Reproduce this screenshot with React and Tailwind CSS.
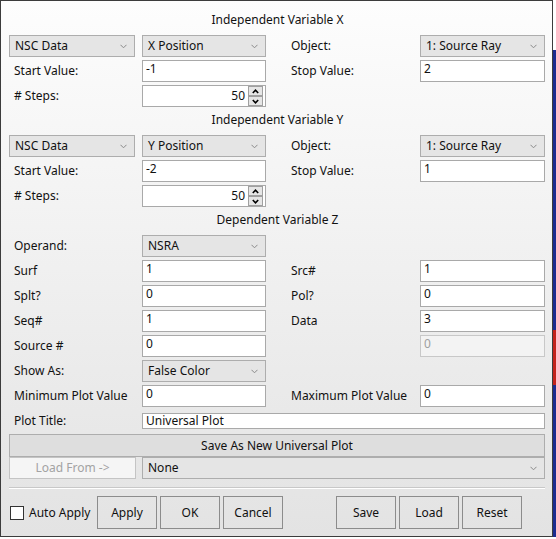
import React from 'react';

const Chevron = () => (
    <svg width="7" height="5" viewBox="0 0 7 5" className="shrink-0">
        <polyline points="0.5,0.8 3.5,3.8 6.5,0.8" fill="none" stroke="#8a8a8a" strokeWidth="1" />
    </svg>
);

const Select = ({ value, className = '' }) => (
    <div className={`h-[22px] border border-[#adadad] bg-[#e5e5e5] flex items-center justify-between pl-[5px] pr-[7px] ${className}`}>
        <span>{value}</span>
        <Chevron />
    </div>
);

const Field = ({ value, disabled, className = '' }) => (
    <div
        className={`h-[22px] border pl-[3px] leading-[16px] ${
            disabled ? 'border-[#c8c8c8] bg-[#f3f3f3] text-[#a0a0a0]' : 'border-[#a9a9a9] bg-white'
        } ${className}`}
    >
        {value}
    </div>
);

const SpinArrow = ({ up }) => (
    <div className="flex-1 border border-[#a0a0a0] bg-[#e6e6e6] flex items-center justify-center">
        <svg width="7" height="5" viewBox="0 0 7 5">
            <polyline
                points={up ? '0.8,4 3.5,1.2 6.2,4' : '0.8,1 3.5,3.8 6.2,1'}
                fill="none"
                stroke="#000"
                strokeWidth="1.6"
            />
        </svg>
    </div>
);

const Spinner = ({ value }) => (
    <div className="h-[22px] w-[124px] border border-[#a9a9a9] bg-white flex items-center pr-[2px]">
        <span className="flex-1 text-right pr-[3px]">{value}</span>
        <div className="w-[15px] h-[20px] flex flex-col">
            <SpinArrow up />
            <SpinArrow />
        </div>
    </div>
);

const Title = ({ children, className = '' }) => (
    <div className={`h-[16px] leading-[16px] text-center ${className}`}>{children}</div>
);

// four columns: 9-142 | 142-266 | 266-420 | 420-545
const Row = ({ left, mid, label, right }) => (
    <div className="flex h-[22px] items-center">
        <div className="w-[133px] shrink-0">{left}</div>
        <div className="w-[124px] shrink-0">{mid}</div>
        <div className="w-[154px] shrink-0 pl-[25px]">{label}</div>
        <div className="w-[125px] shrink-0">{right}</div>
    </div>
);

const Label = ({ children }) => <span className="pl-[5px]">{children}</span>;

const Btn = ({ children }) => (
    <div className="w-[60px] h-[33px] border border-[#8c8c8c] flex items-center justify-center shrink-0">{children}</div>
);

export default function App() {
    return (
        <div className="w-[556px] h-[539px] bg-white flex font-['Noto_Sans',sans-serif] text-[12px] text-[#111]">
            <div className="w-[553px] h-[537px] border border-[#3c3c3c] bg-linear-to-b from-[#fdfdfd] to-[#e3e3e3] pl-[8px] pr-[6px] flex flex-col">
                <Title className="mt-[11px] mb-[7px]">Independent Variable X</Title>
                <div className="flex flex-col gap-[3px]">
                    <Row
                        left={<Select value="NSC Data" className="w-[126px]" />}
                        mid={<Select value="X Position" />}
                        label="Object:"
                        right={<Select value="1: Source Ray" />}
                    />
                    <Row left={<Label>Start Value:</Label>} mid={<Field value="-1" />} label="Stop Value:" right={<Field value="2" />} />
                    <Row left={<Label># Steps:</Label>} mid={<Spinner value="50" />} />
                </div>

                <Title className="mt-[5px] mb-[7px]">Independent Variable Y</Title>
                <div className="flex flex-col gap-[3px]">
                    <Row
                        left={<Select value="NSC Data" className="w-[126px]" />}
                        mid={<Select value="Y Position" />}
                        label="Object:"
                        right={<Select value="1: Source Ray" />}
                    />
                    <Row left={<Label>Start Value:</Label>} mid={<Field value="-2" />} label="Stop Value:" right={<Field value="1" />} />
                    <Row left={<Label># Steps:</Label>} mid={<Spinner value="50" />} />
                </div>

                <Title className="mt-[5px] mb-[7px]">Dependent Variable Z</Title>
                <div className="flex flex-col gap-[3px]">
                    <Row left={<Label>Operand:</Label>} mid={<Select value="NSRA" />} />
                    <Row left={<Label>Surf</Label>} mid={<Field value="1" />} label="Src#" right={<Field value="1" />} />
                    <Row left={<Label>Splt?</Label>} mid={<Field value="0" />} label="Pol?" right={<Field value="0" />} />
                    <Row left={<Label>Seq#</Label>} mid={<Field value="1" />} label="Data" right={<Field value="3" />} />
                    <Row left={<Label>Source #</Label>} mid={<Field value="0" />} right={<Field value="0" disabled />} />
                    <Row left={<Label>Show As:</Label>} mid={<Select value="False Color" />} />
                    <Row
                        left={<Label>Minimum Plot Value</Label>}
                        mid={<Field value="0" />}
                        label="Maximum Plot Value"
                        right={<Field value="0" />}
                    />
                </div>

                <div className="flex h-[16px] items-center mt-[6px]">
                    <div className="w-[133px] shrink-0"><Label>Plot Title:</Label></div>
                    <div className="w-[403px] h-[16px] border border-[#a9a9a9] bg-white pl-[3px] leading-[14px]">Universal Plot</div>
                </div>

                <div className="mt-[5px] w-[536px] h-[23px] border border-[#adadad] bg-[#dedede] flex items-center justify-center">
                    Save As New Universal Plot
                </div>

                <div className="flex h-[22px]">
                    <div className="w-[127px] border border-[#c4c4c4] bg-[#f5f5f5] text-[#a3a3a3] flex items-center justify-center">
                        Load From -&gt;
                    </div>
                    <Select value="None" className="ml-[6px] w-[403px]" />
                </div>

                <div className="mt-[8px] w-[536px] h-[2px] border-t border-[#c8c8c8] border-b border-b-white" />

                <div className="mt-[7px] flex items-center h-[33px]">
                    <div className="ml-[1px] w-[14px] h-[14px] border border-[#333] bg-white shrink-0" />
                    <span className="ml-[5px] w-[68px] shrink-0">Auto Apply</span>
                    <div className="flex gap-[3px]">
                        <Btn>Apply</Btn>
                        <Btn>OK</Btn>
                        <Btn>Cancel</Btn>
                    </div>
                    <div className="flex gap-[3px] ml-[53px]">
                        <Btn>Save</Btn>
                        <Btn>Load</Btn>
                        <Btn>Reset</Btn>
                    </div>
                </div>
            </div>
            <div className="w-[3px] h-[537px] flex flex-col">
                <div className="h-[50px] bg-white" />
                <div className="h-[280px] bg-[#1c2b8f]" />
                <div className="h-[55px] bg-[#c3221c]" />
                <div className="flex-1 bg-[#1c2b8f]" />
            </div>
        </div>
    );
}
